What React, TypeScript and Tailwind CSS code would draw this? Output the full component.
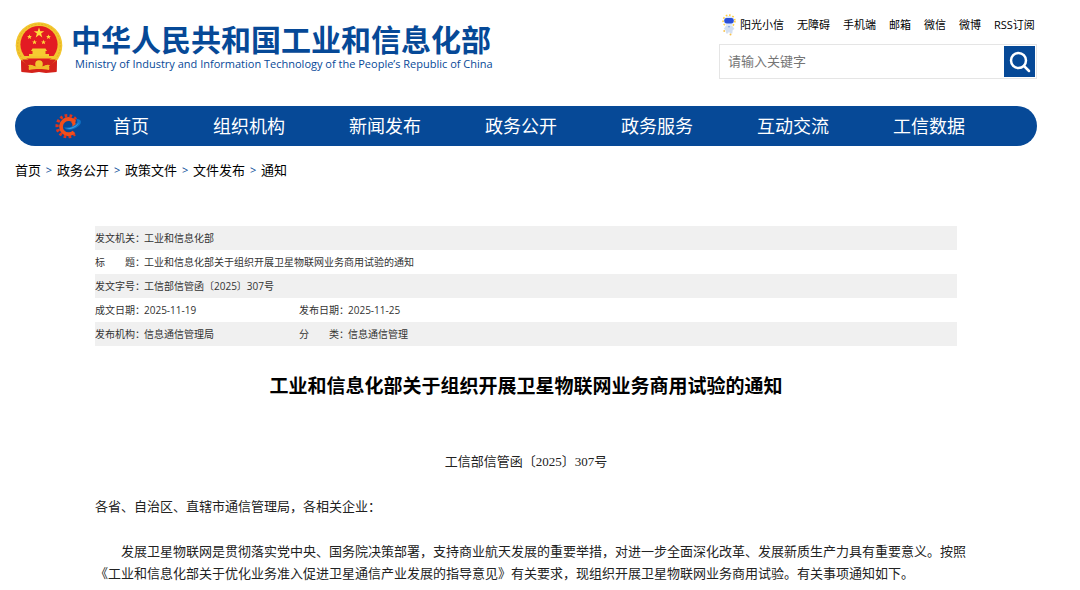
import type { ReactNode } from 'react'

const topLinks = ['无障碍', '手机端', '邮箱', '微信', '微博', 'RSS订阅']

const navItems = ['首页', '组织机构', '新闻发布', '政务公开', '政务服务', '互动交流', '工信数据']

const crumbs = ['首页', '政务公开', '政策文件', '文件发布', '通知']

function NationalEmblem() {
  return (
    <svg viewBox="0 0 48 52" className="w-12 h-[52px] shrink-0" aria-hidden="true">
      <path d="M6 34 L6.500 50 L17 51 L24 50 L31 51 L41.500 50 L42 34 Z" fill="#d5221b" />
      <circle cx="24" cy="23.500" r="23.300" fill="#f3c62f" />
      <circle cx="24" cy="23.500" r="21.300" fill="none" stroke="#e3b022" strokeWidth="1" strokeDasharray="2 1.400" />
      <circle cx="24" cy="22.500" r="18.600" fill="#e31b23" />
      <path d="M24 5.500l1.300 3.700h3.900l-3.100 2.400 1.200 3.800-3.300-2.300-3.300 2.300 1.200-3.800-3.100-2.400h3.900z" fill="#ffdf3d" />
      <g fill="#ffd83a">
        <path d="M14.500 12.500l.7 1.600h1.700l-1.300 1.100.5 1.700-1.600-1-1.600 1 .5-1.700-1.300-1.100h1.700z" />
        <path d="M33.500 12.500l.7 1.600h1.700l-1.300 1.100.5 1.700-1.600-1-1.600 1 .5-1.700-1.300-1.100h1.700z" />
        <path d="M19.500 17.800l.7 1.600h1.700l-1.300 1.100.5 1.700-1.600-1-1.600 1 .5-1.700-1.300-1.100h1.700z" />
        <path d="M28.500 17.800l.7 1.600h1.700l-1.300 1.100.5 1.700-1.600-1-1.600 1 .5-1.700-1.300-1.100h1.700z" />
      </g>
      <path d="M17.500 26.500h13l1.500 2.500h-1.500v3H34v2.500H14V32h3.500v-3H16z" fill="#f6cb31" />
      <path d="M8 34h32v2.500H8z" fill="#f3c62f" />
      <path d="M7 38c5-1.500 11 2 17-1 6 3 12-.5 17 1l-5 5.500c-4-2-6 0-8 1h-8c-2-1-4-3-8-1z" fill="#d5221b" />
      <circle cx="24" cy="42" r="3.800" fill="#f3c62f" />
      <path d="M12 43.500c4-1.500 7 .5 9 1h6c2-.5 5-2.500 9-1l-2 4.500c-4-1-6-1-10-1s-6 0-10 1z" fill="#f0bd2a" />
      <path d="M6 38l8 6-1 6-6.500-.500zM42 38l-8 6 1 6 6.500-.500z" fill="#d5221b" />
    </svg>
  )
}

function Mascot() {
  return (
    <svg viewBox="0 0 14 22" className="w-3.5 h-[22px]" aria-hidden="true">
      <circle cx="7" cy="7" r="5.900" fill="none" stroke="#ffcf3f" strokeWidth="1.600" strokeDasharray="1.600 1.800" />
      <circle cx="7" cy="7" r="5" fill="#dce8fb" />
      <rect x="2.200" y="4" width="9.600" height="5.400" rx="2.400" fill="#2c50d8" />
      <path d="M4 11.500h6l2.500 3.500-1.800 1-.4 3.500H8l-1-2-1 2H4.200L3.500 16l-1.700-1z" fill="#d3dff1" />
      <path d="M6 12h2l-1 2z" fill="#7fa5e8" />
      <circle cx="8.500" cy="20.500" r="1" fill="#f8c24c" />
      <circle cx="2.200" cy="17" r=".9" fill="#f8c24c" />
    </svg>
  )
}

function GearLogo() {
  return (
    <svg viewBox="0 0 26 26" className="w-[26px] h-[26px]" aria-hidden="true">
      {/* teeth */}
      <path
        d="M20.800 6.400A10.600 10.600 0 1 0 19.800 21"
        fill="none"
        stroke="#e5351a"
        strokeWidth="3.200"
        strokeDasharray="2.600 2.200"
      />
      {/* ring of the "e" */}
      <path
        d="M19.800 9.200A7.600 7.600 0 1 0 19 19"
        fill="none"
        stroke="#f24e1b"
        strokeWidth="3.800"
      />
      <path d="M18.200 7.200c2.800 1.500 3.300 4.300 1.200 6.300l-2.600.6c1-1.700 1-3.200-.6-4.600z" fill="#f24e1b" />
      {/* swoosh */}
      <path d="M9.200 14.200c4.800 1 10.300-.8 12.600-4.200.9-1.500.5-2.900-.8-3.900 2.700-.2 4.800.7 4.900 2.700.2 3.800-6.300 7.900-11.400 7.900-2.700 0-4.500-.8-5.300-2.500z" fill="#1071c4" />
      <path d="M11.500 15.200c4.900.3 9.800-2.200 12.300-6-.5 3.700-5.800 6.800-10.200 6.800z" fill="#3a9de2" />
    </svg>
  )
}

function SearchIcon() {
  return (
    <svg viewBox="0 0 24 24" className="w-6 h-6" fill="none" stroke="#fff" strokeWidth="2.500" aria-hidden="true">
      <circle cx="10.500" cy="10.500" r="7.500" />
      <path d="M16 16l5 5" strokeLinecap="round" />
    </svg>
  )
}

function Label({ children }: { children: ReactNode }) {
  return (
    <th scope="row" className="p-0 font-normal text-left whitespace-nowrap">
      {children}
    </th>
  )
}

export default function App() {
  return (
    <div className="min-h-screen bg-white pl-[15px] pr-[43px] text-black font-['Open_Sans','Noto_Sans_CJK_SC',sans-serif]">
      <header className="flex items-start justify-between">
        <a href="#" className="flex items-start gap-2 pt-5 text-[#064997]">
          <span className="pt-0.5">
            <NationalEmblem />
          </span>
          <span className="flex flex-col whitespace-nowrap">
            <span className="text-[30px] leading-9 font-bold font-['Noto_Sans_CJK_SC',sans-serif]">
              中华人民共和国工业和信息化部
            </span>
            <span className="pt-0.5 pl-1 text-[11px] leading-3">
              Ministry of Industry and Information Technology of the People’s Republic of China
            </span>
          </span>
        </a>

        <div className="w-[318px] pt-3.5">
          <div className="flex items-center gap-[13px] h-[22px] pl-[3px] text-[11px] whitespace-nowrap">
            <a href="#" className="flex items-center gap-1">
              <Mascot />
              阳光小信
            </a>
            {topLinks.map(link => (
              <a key={link} href="#">{link}</a>
            ))}
          </div>
          <form className="flex mt-2 h-[35px] p-px border border-[#e5e5e5]" onSubmit={e => e.preventDefault()}>
            <input
              type="text"
              aria-label="请输入关键字"
              placeholder="请输入关键字"
              className="flex-1 min-w-0 px-[7px] text-[13px] outline-none placeholder:text-[#757575]"
            />
            <button type="submit" aria-label="搜索" className="w-[31px] h-[31px] bg-[#064997] flex items-center justify-center">
              <SearchIcon />
            </button>
          </form>
        </div>
      </header>

      <nav className="flex items-center mt-[27px] h-10 pl-10 rounded-full bg-[#064997] text-white">
        <GearLogo />
        <div className="flex gap-16 pl-8 text-lg whitespace-nowrap">
          {navItems.map(item => (
            <a key={item} href="#">{item}</a>
          ))}
        </div>
      </nav>

      <div className="flex pt-3.5 text-[13px] leading-5">
        {crumbs.map((crumb, i) => (
          <span key={crumb} className="flex">
            {i > 0 && <span className="w-4 text-center text-[11px] text-[#064997]">&gt;</span>}
            <a href="#">{crumb}</a>
          </span>
        ))}
      </div>

      <main className="pt-[46px] px-20">
        <table className="w-full table-fixed border-collapse text-[10px] leading-6 text-[#333] [&_td]:p-0">
          <colgroup>
            <col className="w-[49px]" />
            <col className="w-[155px]" />
            <col className="w-[49px]" />
            <col />
          </colgroup>
          <tbody>
            <tr className="bg-[#f0f0f0]">
              <Label>发文机关：</Label>
              <td colSpan={3}>工业和信息化部</td>
            </tr>
            <tr>
              <Label>标　　题：</Label>
              <td colSpan={3}>工业和信息化部关于组织开展卫星物联网业务商用试验的通知</td>
            </tr>
            <tr className="bg-[#f0f0f0]">
              <Label>发文字号：</Label>
              <td colSpan={3}>工信部信管函〔2025〕307号</td>
            </tr>
            <tr>
              <Label>成文日期：</Label>
              <td>2025-11-19</td>
              <Label>发布日期：</Label>
              <td>2025-11-25</td>
            </tr>
            <tr className="bg-[#f0f0f0]">
              <Label>发布机构：</Label>
              <td>信息通信管理局</td>
              <Label>分　　类：</Label>
              <td>信息通信管理</td>
            </tr>
          </tbody>
        </table>

        <h1 className="pt-[26px] text-center text-[19px] leading-7 font-bold">
          工业和信息化部关于组织开展卫星物联网业务商用试验的通知
        </h1>

        <article className="-mr-3 pt-[51px] text-[13px] leading-[22px] text-[#222] font-['Liberation_Serif','Noto_Sans_CJK_SC',sans-serif]">
          <p className="pr-3 text-center">工信部信管函〔2025〕307号</p>
          <p className="pt-[23px]">各省、自治区、直辖市通信管理局，各相关企业：</p>
          <p className="pt-[23px] indent-[26px]">
            发展卫星物联网是贯彻落实党中央、国务院决策部署，支持商业航天发展的重要举措，对进一步全面深化改革、发展新质生产力具有重要意义。按照《工业和信息化部关于优化业务准入促进卫星通信产业发展的指导意见》有关要求，现组织开展卫星物联网业务商用试验。有关事项通知如下。
          </p>
        </article>
      </main>
    </div>
  )
}
